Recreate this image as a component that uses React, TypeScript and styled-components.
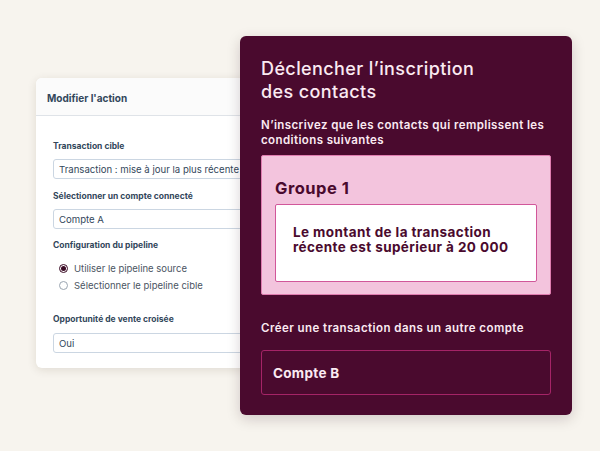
import React from "react";
import styled, { createGlobalStyle } from "styled-components";

const Global = createGlobalStyle`
  html, body { margin: 0; padding: 0; }
  body { background: #f7f4ee; font-family: "Inter", "Lato", sans-serif; }
`;

const Stage = styled.div`
  position: relative;
  width: 600px;
  height: 451px;
  overflow: hidden;
  background: #f7f4ee;
`;

const ActionCard = styled.div`
  position: absolute;
  left: 36px;
  top: 78px;
  width: 240px;
  height: 290px;
  background: #ffffff;
  border-radius: 6px;
  box-shadow: 0 2px 10px rgba(60, 40, 20, 0.12);
  overflow: hidden;
  display: flex;
  flex-direction: column;
`;

const CardHeader = styled.div`
  height: 34px;
  padding-top: 3px;
  display: flex;
  align-items: center;
  padding-left: 11px;
  background: #fbfbfb;
  border-bottom: 1px solid #dfe3e8;
  font-size: 10px;
  font-weight: 700;
  color: #33475b;
`;

const CardBody = styled.div`
  padding: 24px 0 0 17px;
  display: flex;
  flex-direction: column;
`;

const FieldLabel = styled.div<{ $gap?: number }>`
  font-size: 8.5px;
  font-weight: 700;
  line-height: 12px;
  color: #33475b;
  margin-bottom: ${(p) => p.$gap ?? 7}px;
`;

const Field = styled.div<{ $after?: number }>`
  height: 18px;
  border: 1px solid #cbd6e2;
  border-radius: 3px;
  display: flex;
  align-items: center;
  padding-left: 5px;
  font-size: 9.6px;
  color: #33475b;
  white-space: nowrap;
  margin-bottom: ${(p) => p.$after ?? 11}px;
`;

const RadioRow = styled.div`
  display: flex;
  align-items: center;
  gap: 6px;
  padding-left: 6px;
  height: 17px;
  font-size: 9.5px;
  color: #4b5563;
`;

const Radio = styled.span<{ $on?: boolean }>`
  width: 9px;
  height: 9px;
  border-radius: 50%;
  border: 1px solid ${(p) => (p.$on ? "#3a0a24" : "#9aa5b1")};
  box-sizing: border-box;
  display: flex;
  align-items: center;
  justify-content: center;
  &::after {
    content: "";
    width: 5px;
    height: 5px;
    border-radius: 50%;
    background: ${(p) => (p.$on ? "#3a0a24" : "transparent")};
  }
`;

const RadioGroup = styled.div`
  display: flex;
  flex-direction: column;
  margin: 0 0 19px 0;
`;

const TriggerPanel = styled.div`
  position: absolute;
  left: 240px;
  top: 36px;
  width: 332px;
  height: 379px;
  box-sizing: border-box;
  background: #4a0a2e;
  border-radius: 6px;
  box-shadow: 0 4px 14px rgba(40, 10, 20, 0.18);
  padding: 21px 21px 0 21px;
  display: flex;
  flex-direction: column;
`;

const Title = styled.h1`
  margin: 0;
  font-size: 18px;
  font-weight: 500;
  line-height: 23px;
  color: #fbeaf2;
  letter-spacing: 0.4px;
`;

const Subtitle = styled.p`
  margin: 15px 0 7px 0;
  font-size: 11.5px;
  font-weight: 600;
  line-height: 15px;
  letter-spacing: 0.4px;
  color: #fbeaf2;
`;

const GroupBox = styled.div`
  background: #f3c4dd;
  border: 1px solid #e07db0;
  border-radius: 2px;
  padding: 23px 13px 12px 13px;
  display: flex;
  flex-direction: column;
`;

const GroupTitle = styled.div`
  font-size: 16.5px;
  font-weight: 700;
  color: #4a0a2e;
  line-height: 18px;
  letter-spacing: 0.5px;
  margin-bottom: 7px;
`;

const ConditionBox = styled.div`
  background: #ffffff;
  border: 1px solid #d1579a;
  border-radius: 2px;
  height: 56px;
  padding: 20px 18px 0 17px;
  font-size: 13.5px;
  font-weight: 700;
  line-height: 15px;
  letter-spacing: 0.4px;
  color: #4a0a2e;
`;

const SectionLabel = styled.div`
  margin-top: 26px;
  font-size: 11.5px;
  font-weight: 600;
  line-height: 15px;
  letter-spacing: 0.45px;
  color: #fbeaf2;
`;

const AccountBox = styled.div`
  margin-top: 14px;
  height: 43px;
  border: 1px solid #a52467;
  border-radius: 3px;
  display: flex;
  align-items: center;
  padding-left: 11px;
  font-size: 13.5px;
  font-weight: 700;
  letter-spacing: 0.3px;
  color: #fbeaf2;
`;

export default function App() {
  return (
    <>
      <Global />
      <Stage>
        <ActionCard>
          <CardHeader>Modifier l'action</CardHeader>
          <CardBody>
            <FieldLabel>Transaction cible</FieldLabel>
            <Field>Transaction : mise à jour la plus récente</Field>
            <FieldLabel>Sélectionner un compte connecté</FieldLabel>
            <Field $after={10}>Compte A</Field>
            <FieldLabel $gap={9}>Configuration du pipeline</FieldLabel>
            <RadioGroup>
              <RadioRow>
                <Radio $on />
                Utiliser le pipeline source
              </RadioRow>
              <RadioRow>
                <Radio />
                Sélectionner le pipeline cible
              </RadioRow>
            </RadioGroup>
            <FieldLabel $gap={8}>Opportunité de vente croisée</FieldLabel>
            <Field>Oui</Field>
          </CardBody>
        </ActionCard>
        <TriggerPanel>
          <Title>
            Déclencher l’inscription
            <br />
            des contacts
          </Title>
          <Subtitle>
            N’inscrivez que les contacts qui remplissent les conditions suivantes
          </Subtitle>
          <GroupBox>
            <GroupTitle>Groupe 1</GroupTitle>
            <ConditionBox>
              Le montant de la transaction
              <br />
              récente est supérieur à 20 000
            </ConditionBox>
          </GroupBox>
          <SectionLabel>Créer une transaction dans un autre compte</SectionLabel>
          <AccountBox>Compte B</AccountBox>
        </TriggerPanel>
      </Stage>
    </>
  );
}
